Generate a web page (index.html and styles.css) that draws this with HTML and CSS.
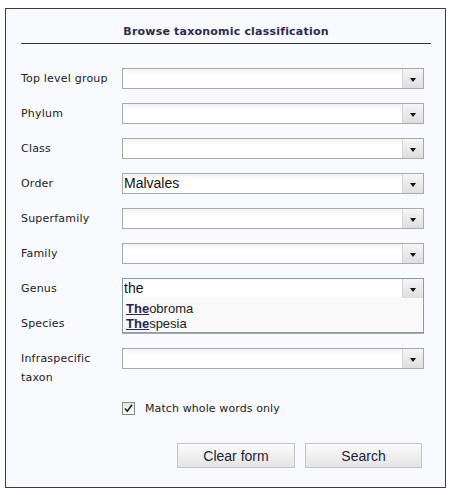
FILE: index.html
```html
<!DOCTYPE html>
<html>
<head>
<meta charset="utf-8">
<link rel="stylesheet" href="styles.css">
</head>
<body>
<div class="panel">
  <h2 class="title">Browse taxonomic classification</h2>
  <div class="form">
    <label class="lbl">Top level group</label>
    <div class="combo"><span class="val"></span><span class="btn"><i class="arrow"></i></span></div>
    <label class="lbl">Phylum</label>
    <div class="combo"><span class="val"></span><span class="btn"><i class="arrow"></i></span></div>
    <label class="lbl">Class</label>
    <div class="combo"><span class="val"></span><span class="btn"><i class="arrow"></i></span></div>
    <label class="lbl">Order</label>
    <div class="combo"><span class="val">Malvales</span><span class="btn"><i class="arrow"></i></span></div>
    <label class="lbl">Superfamily</label>
    <div class="combo"><span class="val"></span><span class="btn"><i class="arrow"></i></span></div>
    <label class="lbl">Family</label>
    <div class="combo"><span class="val"></span><span class="btn"><i class="arrow"></i></span></div>
    <label class="lbl">Genus</label>
    <div class="combo focus"><span class="val">the</span><span class="btn"><i class="arrow"></i></span>
      <ul class="list">
        <li><b>The</b>obroma</li>
        <li><b>The</b>spesia</li>
      </ul>
    </div>
    <label class="lbl">Species</label>
    <div class="combo"><span class="val"></span><span class="btn"><i class="arrow"></i></span></div>
    <label class="lbl">Infraspecific<br>taxon</label>
    <div class="combo"><span class="val"></span><span class="btn"><i class="arrow"></i></span></div>
    <span></span>
    <div class="check">
      <span class="box"><svg width="11" height="11" viewBox="0 0 11 11"><path d="M2 5.5 L4.3 8.3 L9 1.8" fill="none" stroke="#222" stroke-width="1.6"/></svg></span>
      <span class="check-text">Match whole words only</span>
    </div>
  </div>
  <div class="actions">
    <button class="button clear">Clear form</button>
    <button class="button search">Search</button>
  </div>
</div>
</body>
</html>
```
FILE: styles.css
```css
html, body {
  margin: 0;
  padding: 0;
  background: #ffffff;
}
.panel {
  box-sizing: border-box;
  width: 441px;
  height: 480px;
  margin: 8px 0 0 5px;
  border: 1px solid #3a3a52;
  background: #f8fafd;
  font-family: "DejaVu Sans", Verdana, sans-serif;
}
.title {
  margin: 0 14px 0 15px;
  padding: 16px 0 4px;
  font-size: 11px;
  line-height: 14px;
  font-weight: bold;
  letter-spacing: 0.2px;
  color: #2c2c4c;
  text-align: center;
  border-bottom: 1px solid #2c2c44;
}
.form {
  display: grid;
  grid-template-columns: 101px 302px;
  row-gap: 14px;
  margin: 24px 0 0 15px;
}
.lbl {
  font-size: 11px;
  line-height: 19px;
  letter-spacing: 0.2px;
  padding-top: 1px;
  color: #222;
}
.combo {
  position: relative;
  box-sizing: border-box;
  height: 21px;
  border: 1px solid #a9a9a9;
  background: linear-gradient(#f2f2f2, #ffffff 6px);
  display: flex;
}
.combo.focus {
  border-color: #7f9db9;
  background: #ffffff;
}
.val {
  flex: 1;
  padding-left: 1px;
  font-family: "Liberation Sans", Arial, sans-serif;
  font-size: 14px;
  line-height: 19px;
  color: #111;
}
.btn {
  width: 20px;
  border-left: 1px solid #d4d4d4;
  background: linear-gradient(#f6f6f6, #dedede);
  display: flex;
  align-items: center;
  justify-content: center;
}
.arrow {
  display: block;
  width: 0;
  height: 0;
  border-left: 3.5px solid transparent;
  border-right: 3.5px solid transparent;
  border-top: 4px solid #111;
  margin-top: 2px;
}
.list {
  position: absolute;
  left: -1px;
  right: -1px;
  top: 100%;
  margin: 0;
  padding: 3px 0 1px;
  list-style: none;
  box-sizing: border-box;
  border: 1px solid #7f9db9;
  border-top: 0;
  background: #f9f9f9;
  z-index: 2;
}
.list li {
  height: 15px;
  line-height: 15px;
  padding-left: 3px;
  font-family: "Liberation Sans", Arial, sans-serif;
  font-size: 13px;
  color: #222;
}
.list b {
  color: #262650;
  text-decoration: underline;
}
.check {
  display: flex;
  align-items: center;
  margin-top: -3px;
  height: 20px;
}
.box {
  box-sizing: border-box;
  width: 13px;
  height: 13px;
  border: 1px solid #8a8a8a;
  background: linear-gradient(#e6e6e6, #ffffff);
  display: flex;
  align-items: center;
  justify-content: center;
}
.check-text {
  margin-left: 10px;
  font-size: 11px;
  letter-spacing: 0.1px;
  color: #222;
}
.actions {
  display: flex;
  gap: 10px;
  margin: 25px 0 0 171px;
}
.button {
  box-sizing: border-box;
  height: 25px;
  border: 1px solid #c4c4c4;
  background: linear-gradient(#fbfbfb, #e4e4e4);
  font-family: "Liberation Sans", Arial, sans-serif;
  font-size: 14px;
  color: #1e1e36;
  padding: 0;
}
.clear { width: 118px; }
.search { width: 117px; }
```
